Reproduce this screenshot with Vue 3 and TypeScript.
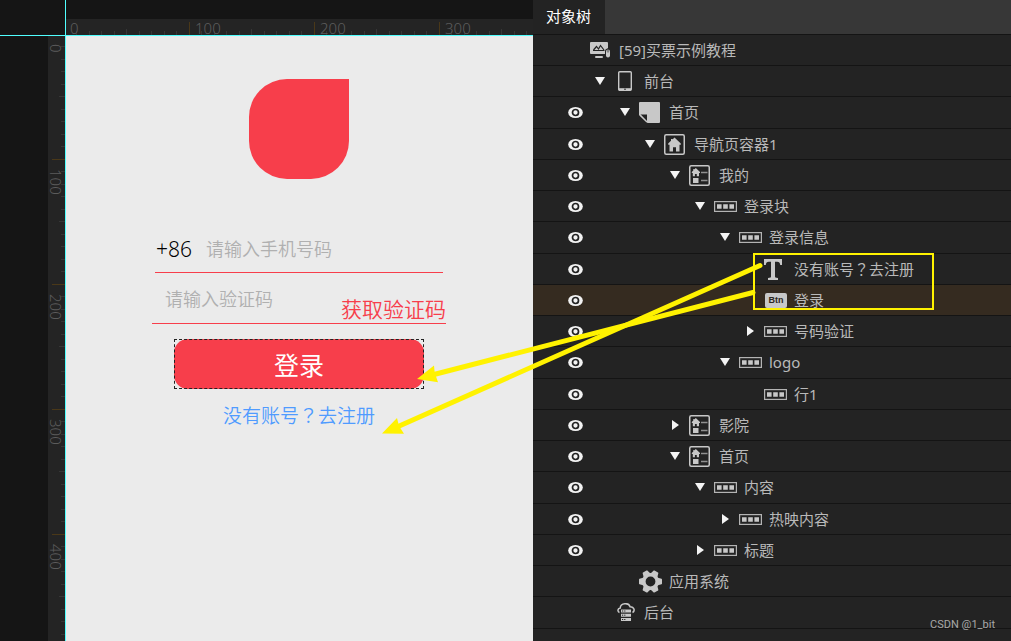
<script setup lang="ts">
import { computed, onBeforeUnmount, onMounted, ref } from 'vue'

type IconName = 'project' | 'device' | 'page' | 'nav' | 'navItem' | 'row' | 'text' | 'button' | 'gear' | 'cloud'

interface TreeNode {
  label: string
  depth: number
  icon: IconName
  visible?: boolean
  expanded?: boolean
}

interface Tick {
  pos: number
  kind: 'major' | 'half' | 'minor'
}

const nodes: TreeNode[] = [
  { label: '[59]买票示例教程', depth: 0, icon: 'project' },
  { label: '前台', depth: 1, icon: 'device', expanded: true },
  { label: '首页', depth: 2, icon: 'page', visible: true, expanded: true },
  { label: '导航页容器1', depth: 3, icon: 'nav', visible: true, expanded: true },
  { label: '我的', depth: 4, icon: 'navItem', visible: true, expanded: true },
  { label: '登录块', depth: 5, icon: 'row', visible: true, expanded: true },
  { label: '登录信息', depth: 6, icon: 'row', visible: true, expanded: true },
  { label: '没有账号？去注册', depth: 7, icon: 'text', visible: true },
  { label: '登录', depth: 7, icon: 'button', visible: true },
  { label: '号码验证', depth: 7, icon: 'row', visible: true, expanded: false },
  { label: 'logo', depth: 6, icon: 'row', visible: true, expanded: true },
  { label: '行1', depth: 7, icon: 'row', visible: true },
  { label: '影院', depth: 4, icon: 'navItem', visible: true, expanded: false },
  { label: '首页', depth: 4, icon: 'navItem', visible: true, expanded: true },
  { label: '内容', depth: 5, icon: 'row', visible: true, expanded: true },
  { label: '热映内容', depth: 6, icon: 'row', visible: true, expanded: false },
  { label: '标题', depth: 5, icon: 'row', visible: true, expanded: false },
  { label: '应用系统', depth: 2, icon: 'gear' },
  { label: '后台', depth: 1, icon: 'cloud' },
]

const selected = ref(8)
const phone = ref('')
const code = ref('')

const scale = 1.25
const tickLength = { major: 13, half: 6, minor: 4 }

function makeTicks(length: number): Tick[] {
  return Array.from({ length: Math.max(0, Math.floor(length / 12.5)) }, (_, i) => ({
    pos: Math.floor((i + 1) * 10 * scale),
    kind: (i + 1) % 10 === 0 ? 'major' : (i + 1) % 5 === 0 ? 'half' : 'minor',
  }))
}
function makeMarks(length: number): number[] {
  return Array.from({ length: Math.max(1, Math.ceil((length - 40) / (100 * scale))) }, (_, i) => i * 100)
}

const stage = ref<HTMLElement | null>(null)
const stageWidth = ref(0)
const stageHeight = ref(0)
function measure() {
  stageWidth.value = (stage.value?.clientWidth ?? 0) - 65
  stageHeight.value = (stage.value?.clientHeight ?? 0) - 35
}
onMounted(() => {
  measure()
  window.addEventListener('resize', measure)
})
onBeforeUnmount(() => window.removeEventListener('resize', measure))

const ticksX = computed(() => makeTicks(stageWidth.value))
const ticksY = computed(() => makeTicks(stageHeight.value))
const marksX = computed(() => makeMarks(stageWidth.value))
const marksY = computed(() => makeMarks(stageHeight.value))
</script>

<template>
  <div class="editor">
    <main ref="stage" class="stage">
      <div class="corner"></div>
      <div class="ruler-top">
        <svg class="ruler-h" aria-hidden="true">
          <rect
            v-for="t in ticksX"
            :key="t.pos"
            :class="t.kind"
            :x="t.pos - 2"
            :y="16 - tickLength[t.kind]"
            width="1"
            :height="tickLength[t.kind]"
          />
          <text v-for="m in marksX" :key="m" :x="m * scale + 4" y="15">{{ m }}</text>
        </svg>
      </div>
      <div class="ruler-left">
        <svg class="ruler-v" aria-hidden="true">
          <rect
            v-for="t in ticksY"
            :key="t.pos"
            :class="t.kind"
            :x="17 - tickLength[t.kind]"
            :y="t.pos - 2"
            :width="tickLength[t.kind]"
            height="1"
          />
          <text v-for="m in marksY" :key="m" :transform="`translate(2 ${m * scale + 8}) rotate(90)`">{{ m }}</text>
        </svg>
      </div>
      <form class="phone" @submit.prevent>
        <div class="logo"></div>
        <div class="field field-phone">
          <label for="phone">+86</label>
          <input id="phone" v-model="phone" type="tel" placeholder="请输入手机号码" />
        </div>
        <div class="field field-code">
          <input v-model="code" type="text" aria-label="验证码" placeholder="请输入验证码" />
          <button type="button" class="get-code">获取验证码</button>
        </div>
        <div class="selection">
          <button type="submit" class="login">登录</button>
        </div>
        <a class="register" href="#register">没有账号<span class="mark">？</span>去注册</a>
      </form>
    </main>

    <aside class="panel">
      <header class="tabs">
        <button type="button" class="tab">对象树</button>
      </header>
      <ul class="tree">
        <li
          v-for="(n, i) in nodes"
          :key="i"
          :class="{ selected: i === selected }"
          @click="selected = i"
        >
          <span class="eye-cell">
            <button v-if="n.visible" type="button" class="plain" aria-label="显示">
              <svg width="15" height="11" viewBox="0 0 15 11">
                <ellipse cx="7.5" cy="5.5" rx="7.3" ry="5.5" fill="#f2f2f2" />
                <circle cx="7.5" cy="5.5" r="3" fill="#f2f2f2" stroke="#222" stroke-width="1.7" />
              </svg>
            </button>
          </span>
          <span v-if="n.depth > 0" class="toggle" :style="{ marginLeft: (n.depth - 1) * 25 + 'px' }">
            <button v-if="n.expanded !== undefined" type="button" class="plain" :aria-expanded="n.expanded" aria-label="展开">
              <svg width="10" height="10" viewBox="0 0 10 10">
                <path v-if="n.expanded" d="M0 1h10L5 9z" fill="#f4f4f4" />
                <path v-else d="M2 0v10L9 5z" fill="#f4f4f4" />
              </svg>
            </button>
          </span>
          <span class="icon" :class="n.icon">
            <svg v-if="n.icon === 'project'" width="21" height="16" viewBox="0 0 21 16">
              <path d="M1 0h16a1 1 0 0 1 1 1v5.5c-2 0-3 1.3-3 3V12H1a1 1 0 0 1-1-1V1a1 1 0 0 1 1-1z" fill="#c8c8c8" />
              <path d="M3 8.5h11.500M3.500 8l3-3.500 2 2.500 2-3.500L14 8" fill="none" stroke="#222" stroke-width="1.2" />
              <rect x="5" y="14" width="8" height="2" rx="1" fill="#c8c8c8" />
              <rect x="16" y="7.500" width="4" height="8" rx="2" fill="#c8c8c8" />
              <path d="M18 7.500V6M18 8v2.500" stroke="#222" stroke-width=".8" />
            </svg>
            <svg v-else-if="n.icon === 'device'" width="14" height="20" viewBox="0 0 14 20">
              <rect x=".7" y=".7" width="12.600" height="18.600" rx="1" fill="none" stroke="#c8c8c8" stroke-width="1.400" />
              <path d="M1 18.200h12" stroke="#c8c8c8" stroke-width="2" />
              <circle cx="7" cy="18.200" r=".8" fill="#222" />
            </svg>
            <svg v-else-if="n.icon === 'page'" width="21" height="21" viewBox="0 0 21 21">
              <path d="M1 0h19a1 1 0 0 1 1 1v19a1 1 0 0 1-1 1H8.500L0 13V1a1 1 0 0 1 1-1z" fill="#c8c8c8" />
              <path d="M1.500 12.500H8v7" fill="#222" />
              <path d="M1 13l7 7" stroke="#c8c8c8" stroke-width="1.300" />
            </svg>
            <svg v-else-if="n.icon === 'nav'" width="21" height="21" viewBox="0 0 21 21">
              <rect x=".75" y=".75" width="19.500" height="19.500" rx="1.500" fill="none" stroke="#c8c8c8" stroke-width="1.500" />
              <path d="M10.500 3.500l6.300 6v1.300h-1.300v6.700H12v-4.200H9v4.200H5.500v-6.700H4.200V9.500L7 6.800V5h1.500v.4z" fill="#c8c8c8" />
            </svg>
            <svg v-else-if="n.icon === 'navItem'" width="21" height="21" viewBox="0 0 21 21">
              <rect x=".75" y=".75" width="19.500" height="19.500" rx="1.500" fill="none" stroke="#c8c8c8" stroke-width="1.500" />
              <path d="M6.800 3l4.200 4v1h-1v3.200H7.800V9H5.900v2.200H3.800V8h-1V7L4.300 5.600V4h1v.5z" fill="#c8c8c8" />
              <rect x="4" y="13" width="5.500" height="5" fill="#c8c8c8" />
              <path d="M12 7.500h6.500M12 15.500h6.500" stroke="#909090" stroke-width="1.500" />
            </svg>
            <svg v-else-if="n.icon === 'row'" width="23" height="11" viewBox="0 0 23 11">
              <rect x=".6" y=".6" width="21.800" height="9.800" fill="none" stroke="#b4b4b4" stroke-width="1.200" />
              <path d="M3 3.200h4.600v4.600H3zM9.200 3.200h4.600v4.600H9.200zM15.400 3.200H20v4.600h-4.600z" fill="#c8c8c8" />
            </svg>
            <svg v-else-if="n.icon === 'text'" width="18" height="21" viewBox="0 0 18 21">
              <path d="M0 0h18v6h-1.800c-.3-2.200-1-3.300-3-3.300h-2.200v14.800c0 1 .6 1.300 3 1.500v2H4v-2c2.400-.2 3-.5 3-1.500V2.700H4.800c-2 0-2.700 1.100-3 3.300H0z" fill="#c8c8c8" />
            </svg>
            <span v-else-if="n.icon === 'button'" class="btn-badge">Btn</span>
            <svg v-else-if="n.icon === 'gear'" width="23" height="23" viewBox="-11.5 -11.5 23 23">
              <circle r="6.700" fill="none" stroke="#c8c8c8" stroke-width="3.600" />
              <path
                v-for="a in [0, 60, 120, 180, 240, 300]"
                :key="a"
                :transform="`rotate(${a})`"
                d="M6.500-4L11-2.700q.5.200.5.700v4q0 .5-.5.700L6.500 4z"
                fill="#c8c8c8"
              />
            </svg>
            <svg v-else width="18" height="19" viewBox="0 0 18 19">
              <path d="M2.500 9.500C.3 8.500.3 5.500 3.200 5 3.500-.2 12-.7 13.100 3.800c4.200.2 5.200 4 2.400 5.700" fill="none" stroke="#c8c8c8" stroke-width="1.500" />
              <path d="M4 6.500h10v3H4zM4 10.700h10v3H4zM4 15h10v3H4z" fill="#c8c8c8" />
              <path d="M5 8h1.200M7.200 8h1.200M5 12.200h1.200M7.200 12.200h1.200M5 16.500h1.200M7.200 16.500h1.200" stroke="#222" />
            </svg>
          </span>
          <span class="label"><template v-for="(part, p) in n.label.split('？')" :key="p"><span v-if="p > 0" class="mark">？</span>{{ part }}</template></span>
        </li>
      </ul>
    </aside>

    <svg class="annotations" width="1011" height="641" viewBox="0 0 1011 641" aria-hidden="true">
      <rect x="754" y="254" width="179" height="55" fill="none" stroke="#fff200" stroke-width="2" />
      <g stroke="#fff200" stroke-width="5" stroke-linecap="round">
        <path d="M753 292.500L432 375" />
        <path d="M760 265.500L397 427" />
      </g>
      <path d="M417 379l17-13.500.700 7 3.300 9.700zM382 433.500l15-15.500 2 8 5 7.700z" fill="#fff200" />
    </svg>
    <div class="watermark">CSDN @1_bit</div>
  </div>
</template>

<style>
html,
body,
#app {
  height: 100%;
}
body {
  margin: 0;
  background: #151515;
}
</style>

<style scoped>
.editor {
  position: relative;
  display: flex;
  min-height: 100%;
  overflow: hidden;
  font-family: "Noto Sans", "Noto Sans CJK SC", sans-serif;
  font-size: 15px;
}
button,
input {
  margin: 0;
  padding: 0;
  border: 0;
  background: none;
  font-family: inherit;
  outline: none;
}
button {
  cursor: pointer;
}
.mark {
  font-family: "Noto Sans CJK TC", sans-serif;
}
.stage {
  flex: 1;
  min-width: 0;
  display: grid;
  grid-template-columns: 65px minmax(0, 1fr);
  grid-template-rows: 35px minmax(0, 1fr);
  background: #151515;
}
.corner {
  border-right: 1px solid #50ffff;
  border-bottom: 1px solid #50ffff;
  margin: 0 -1px -1px 0;
}
.ruler-top {
  display: flex;
  align-items: flex-end;
  margin-left: 1px;
  margin-bottom: -1px;
  border-bottom: 1px solid #50ffff;
}
.ruler-h {
  width: 100%;
  height: 16px;
  overflow: visible;
  background: #242424;
}
.ruler-left {
  display: flex;
  justify-content: flex-end;
  margin-top: 1px;
  margin-right: -1px;
  border-right: 1px solid #50ffff;
}
.ruler-v {
  width: 17px;
  height: 100%;
  overflow: visible;
  background: #242424;
}
.ruler-h text,
.ruler-v text {
  font-size: 15px;
  font-weight: 300;
  fill: #5c5c5c;
}
.major {
  fill: #4a3818;
}
.half,
.minor {
  fill: #363636;
}
.phone {
  display: flex;
  flex-direction: column;
  align-items: center;
  margin: 1px 0 0 1px;
  padding: 43px 1px 0 0;
  background: #ebebeb;
  font-weight: 350;
}
.logo {
  width: 100px;
  height: 100px;
  border-radius: 38px 0 38px 38px;
  background: #f73e4b;
}
.field {
  display: flex;
  box-sizing: border-box;
  border-bottom: 1px solid #f73e4b;
}
.field input {
  flex: 1;
  min-width: 0;
  font-size: 18px;
  font-weight: 350;
  color: #222;
}
.field input::placeholder {
  color: #b0b0b0;
  opacity: 1;
}
.field-phone {
  width: 288px;
  height: 48px;
  margin-top: 46px;
  align-items: center;
}
.field-phone label {
  width: 50px;
  padding-left: 1px;
  font-size: 21px;
  line-height: 28px;
  font-weight: 300;
  color: #000;
}
.field-code {
  width: 294px;
  height: 51px;
  padding-left: 13px;
}
.field-code input {
  padding-top: 1px;
}
.get-code {
  align-self: flex-end;
  font-size: 21px;
  font-weight: 350;
  line-height: 26px;
  padding-bottom: 1px;
  color: #f73e4b;
}
.selection {
  position: relative;
  display: flex;
  width: 250px;
  height: 50px;
  margin-top: 15px;
}
.selection::after {
  content: "";
  position: absolute;
  inset: 0;
  border: 1px dashed #222;
  pointer-events: none;
}
.login {
  flex: 1;
  border-radius: 14px;
  background: #f73e4b;
  color: #fff;
  font-size: 25px;
}
.register {
  margin-top: 12px;
  font-size: 19px;
  line-height: 28px;
  color: #4f9bff;
  text-decoration: none;
}
.panel {
  flex: 0 0 478px;
  background: #232323;
}
.tabs {
  display: flex;
  height: 34px;
  background: #373737;
  border-bottom: 1px solid #141414;
}
.tab {
  padding: 0 14px 4px 13px;
  background: #232323;
  color: #fff;
  font-size: 15px;
}
.tree {
  margin: 0;
  padding: 0;
  list-style: none;
}
.tree li {
  display: flex;
  align-items: center;
  box-sizing: border-box;
  height: 31px;
  border-bottom: 1px solid #141414;
  color: #b9b9b9;
  white-space: nowrap;
}
.tree li:nth-child(4n + 3) {
  height: 32px;
  padding-bottom: 1px;
}
.tree li.selected {
  background: #352b20;
}
.eye-cell {
  box-sizing: border-box;
  flex: 0 0 55px;
  padding-left: 35px;
}
.plain {
  display: block;
}
.plain svg,
.icon svg {
  display: block;
}
.toggle,
.icon {
  box-sizing: border-box;
  flex: 0 0 25px;
  display: flex;
}
.toggle {
  padding-left: 7px;
}
.icon {
  padding-left: 1px;
}
.icon.project,
.icon.button {
  padding-left: 2px;
}
.icon.cloud {
  padding-left: 4px;
}
.icon.device {
  padding-left: 5px;
}
.label {
  margin-left: 6px;
  line-height: 22px;
}
.btn-badge {
  width: 22px;
  border-radius: 2px;
  background: #c8c8c8;
  color: #2c2620;
  font-family: "Liberation Sans", sans-serif;
  font-size: 9px;
  font-weight: 700;
  line-height: 15px;
  text-align: center;
}
.annotations {
  position: absolute;
  top: 0;
  right: 0;
  pointer-events: none;
}
.watermark {
  position: absolute;
  right: 16px;
  bottom: 8px;
  font-family: Roboto, sans-serif;
  font-size: 11px;
  line-height: 16px;
  color: #a8a8a8;
}
</style>
